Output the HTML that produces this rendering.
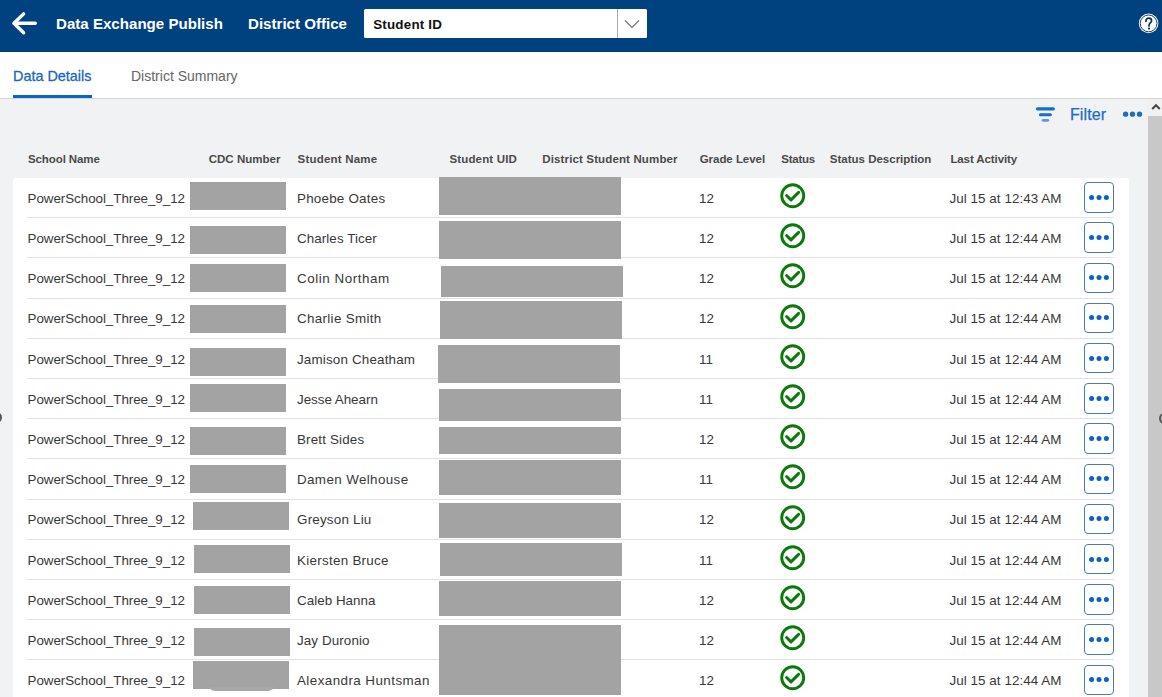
<!DOCTYPE html>
<html><head><meta charset="utf-8">
<style>
*{box-sizing:border-box;margin:0;padding:0}
html,body{width:1162px;height:697px;overflow:hidden;background:#f1f2f4;font-family:"Liberation Sans",sans-serif;position:relative}
.abs{position:absolute}
#hdr{left:0;top:0;width:1162px;height:52px;background:#00427f;border-bottom:1px solid #003a70}
.ht{color:#fff;font-weight:bold;font-size:15.1px;white-space:nowrap;top:15px;line-height:18px}
#dd{left:363.8px;top:8.6px;width:283.4px;height:29.8px;background:#fff;border-radius:1.5px}
#dd .t{left:9.4px;top:8px;letter-spacing:0.2px;font-size:13.4px;font-weight:bold;color:#111;line-height:16px}
#dd .div{left:253.6px;top:0;width:1px;height:29.8px;background:#aaa}
#tabs{left:0;top:52px;width:1162px;height:47px;background:#fff;border-bottom:1px solid #d4d4d4}
.tab{top:15px;font-size:14px;line-height:18px;white-space:nowrap}
#card{left:13px;top:178px;width:1116px;height:530px;background:#fff;border-radius:3px}
.th{top:152px;font-size:11.5px;font-weight:bold;color:#4a4a4a;line-height:14px;white-space:nowrap}
.td{font-size:13.4px;color:#383838;line-height:16px;white-space:nowrap}
.sep{left:27px;width:1087px;height:1px;background:#e2e2e2}
.red{background:#a3a3a3}
.mb{left:1084px;width:30px;height:30.4px;border:1.5px solid #4c7aad;border-radius:4px;background:#fff}
.mb i{position:absolute;top:11.5px;width:5.4px;height:5.4px;border-radius:50%;background:#0b62c2}
</style></head><body>
<div id="hdr" class="abs">
  <svg class="abs" style="left:10px;top:10px" width="30" height="28" viewBox="0 0 30 28">
    <path d="M13.6 3.9 L3.9 13.3 L13.6 22.7 M4.5 13.3 H25.3" stroke="#fff" stroke-width="3.4" fill="none" stroke-linecap="round" stroke-linejoin="round"/>
  </svg>
  <div class="abs ht" style="left:56px">Data Exchange Publish</div>
  <div class="abs ht" style="left:248px">District Office</div>
  <div id="dd" class="abs">
    <div class="abs t">Student ID</div>
    <div class="abs div"></div>
    <svg class="abs" style="left:259px;top:10px" width="18" height="10" viewBox="0 0 18 10"><path d="M2 1.5 L9 8.5 L16 1.5" stroke="#707070" stroke-width="1.2" fill="none"/></svg>
  </div>
  <svg class="abs" style="left:1137px;top:12px" width="23" height="23" viewBox="0 0 23 23">
    <circle cx="11.6" cy="11.4" r="9.8" fill="#f4f8fc"/>
    <circle cx="11.6" cy="11.4" r="8.4" fill="#fff" stroke="#1f3f66" stroke-width="1"/>
    <path d="M8.9 9.2 C8.9 7.2 10.2 6.2 11.8 6.2 C13.5 6.2 14.6 7.3 14.6 8.7 C14.6 10.6 12 11 12 13.2 L12 14" fill="none" stroke="#0f2f57" stroke-width="1.7" stroke-linecap="round"/>
    <circle cx="12" cy="16.6" r="1.1" fill="#0f2f57"/>
  </svg>
</div>
<div id="tabs" class="abs">
  <div class="abs tab" style="left:13px;color:#1b68b9;font-size:14.4px;-webkit-text-stroke:0.3px #1b68b9">Data Details</div>
  <div class="abs" style="left:13px;top:43px;width:79px;height:3px;background:#0b63c4"></div>
  <div class="abs tab" style="left:131px;color:#666">District Summary</div>
</div>
<div class="abs" style="left:0;top:99px;width:1162px;height:598px;background:#f1f2f4"></div>
<svg class="abs" style="left:1034px;top:105px" width="24" height="19" viewBox="0 0 24 19">
  <rect x="1.8" y="2.2" width="19.2" height="3.2" rx="1.6" fill="#1a6fc4"/>
  <rect x="4.9" y="8.3" width="13" height="3" rx="1.5" fill="#1a6fc4"/>
  <rect x="7.7" y="13.9" width="7.5" height="2.8" rx="1.4" fill="#5a9be0"/>
</svg>
<div class="abs" style="left:1070px;top:105.5px;font-size:16px;line-height:18px;color:#1a6fc4;-webkit-text-stroke:0.25px #1a6fc4;letter-spacing:0.1px">Filter</div>
<svg class="abs" style="left:1120px;top:108px" width="26" height="12" viewBox="0 0 26 12"><circle cx="5.6" cy="6.2" r="2.65" fill="#1a6fc4"/><circle cx="12.5" cy="6.2" r="2.65" fill="#1a6fc4"/><circle cx="19.5" cy="6.2" r="2.65" fill="#1a6fc4"/></svg>
<div class="abs" style="left:1147px;top:99px;width:15px;height:598px;background:#f1f1f1"></div>
<div class="abs" style="left:1148px;top:116px;width:14px;height:581px;background:#c8c8c8"></div>
<svg class="abs" style="left:1150px;top:102px" width="12" height="10" viewBox="0 0 12 10"><path d="M2.2 7 L6 3.2 L9.8 7" stroke="#444" stroke-width="2" fill="none"/></svg>
<div class="abs th" id="th0" style="left:28px;letter-spacing:-0.1px">School Name</div>
<div class="abs th" id="th1" style="left:208.7px;letter-spacing:0.022px">CDC Number</div>
<div class="abs th" id="th2" style="left:297.6px;letter-spacing:0.2px">Student Name</div>
<div class="abs th" id="th3" style="left:449.4px;letter-spacing:0.16px">Student UID</div>
<div class="abs th" id="th4" style="left:542.3px;letter-spacing:0.136px">District Student Number</div>
<div class="abs th" id="th5" style="left:699.7px;letter-spacing:-0.04px">Grade Level</div>
<div class="abs th" id="th6" style="left:781.3px;letter-spacing:-0.24px">Status</div>
<div class="abs th" id="th7" style="left:829.8px;letter-spacing:0.0px">Status Description</div>
<div class="abs th" id="th8" style="left:950.4px;letter-spacing:-0.1px">Last Activity</div>
<div id="card" class="abs"></div>
<div class="abs td" id="sc0" style="left:27.5px;top:190.86px;letter-spacing:-0.05px">PowerSchool_Three_9_12</div>
<div class="abs td" id="nm0" style="left:297px;top:190.86px;letter-spacing:0.227px">Phoebe Oates</div>
<div class="abs td" id="gr0" style="left:699px;top:190.86px">12</div>
<div class="abs td" id="tm0" style="left:949.5px;top:190.86px;letter-spacing:0.055px">Jul 15 at 12:43 AM</div>
<svg class="abs" style="left:778px;top:181.00px" width="30" height="30" viewBox="0 0 30 30"><circle cx="14.7" cy="14.7" r="11" fill="none" stroke="#0b7a0b" stroke-width="2.9"/><path d="M8.6 14.5 L13 18.9 L20.6 11.4" fill="none" stroke="#0b7a0b" stroke-width="3" stroke-linecap="round" stroke-linejoin="round"/></svg>
<div class="abs mb" style="top:182.20px"><svg style="position:absolute;left:-1.5px;top:-1.5px" width="30" height="30" viewBox="0 0 30 30"><circle cx="7.6" cy="15.6" r="2.5" fill="#0b62c2"/><circle cx="15" cy="15.6" r="2.5" fill="#0b62c2"/><circle cx="22.4" cy="15.6" r="2.5" fill="#0b62c2"/></svg></div>
<div class="abs sep" style="top:217.20px"></div>
<div class="abs td" id="sc1" style="left:27.5px;top:231.06px;letter-spacing:-0.05px">PowerSchool_Three_9_12</div>
<div class="abs td" id="nm1" style="left:297px;top:231.06px;letter-spacing:0.075px">Charles Ticer</div>
<div class="abs td" id="gr1" style="left:699px;top:231.06px">12</div>
<div class="abs td" id="tm1" style="left:949.5px;top:231.06px;letter-spacing:0.055px">Jul 15 at 12:44 AM</div>
<svg class="abs" style="left:778px;top:221.20px" width="30" height="30" viewBox="0 0 30 30"><circle cx="14.7" cy="14.7" r="11" fill="none" stroke="#0b7a0b" stroke-width="2.9"/><path d="M8.6 14.5 L13 18.9 L20.6 11.4" fill="none" stroke="#0b7a0b" stroke-width="3" stroke-linecap="round" stroke-linejoin="round"/></svg>
<div class="abs mb" style="top:222.40px"><svg style="position:absolute;left:-1.5px;top:-1.5px" width="30" height="30" viewBox="0 0 30 30"><circle cx="7.6" cy="15.6" r="2.5" fill="#0b62c2"/><circle cx="15" cy="15.6" r="2.5" fill="#0b62c2"/><circle cx="22.4" cy="15.6" r="2.5" fill="#0b62c2"/></svg></div>
<div class="abs sep" style="top:257.40px"></div>
<div class="abs td" id="sc2" style="left:27.5px;top:271.26px;letter-spacing:-0.05px">PowerSchool_Three_9_12</div>
<div class="abs td" id="nm2" style="left:297px;top:271.26px;letter-spacing:0.551px">Colin Northam</div>
<div class="abs td" id="gr2" style="left:699px;top:271.26px">12</div>
<div class="abs td" id="tm2" style="left:949.5px;top:271.26px;letter-spacing:0.055px">Jul 15 at 12:44 AM</div>
<svg class="abs" style="left:778px;top:261.40px" width="30" height="30" viewBox="0 0 30 30"><circle cx="14.7" cy="14.7" r="11" fill="none" stroke="#0b7a0b" stroke-width="2.9"/><path d="M8.6 14.5 L13 18.9 L20.6 11.4" fill="none" stroke="#0b7a0b" stroke-width="3" stroke-linecap="round" stroke-linejoin="round"/></svg>
<div class="abs mb" style="top:262.60px"><svg style="position:absolute;left:-1.5px;top:-1.5px" width="30" height="30" viewBox="0 0 30 30"><circle cx="7.6" cy="15.6" r="2.5" fill="#0b62c2"/><circle cx="15" cy="15.6" r="2.5" fill="#0b62c2"/><circle cx="22.4" cy="15.6" r="2.5" fill="#0b62c2"/></svg></div>
<div class="abs sep" style="top:297.60px"></div>
<div class="abs td" id="sc3" style="left:27.5px;top:311.46px;letter-spacing:-0.05px">PowerSchool_Three_9_12</div>
<div class="abs td" id="nm3" style="left:297px;top:311.46px;letter-spacing:0.325px">Charlie Smith</div>
<div class="abs td" id="gr3" style="left:699px;top:311.46px">12</div>
<div class="abs td" id="tm3" style="left:949.5px;top:311.46px;letter-spacing:0.055px">Jul 15 at 12:44 AM</div>
<svg class="abs" style="left:778px;top:301.60px" width="30" height="30" viewBox="0 0 30 30"><circle cx="14.7" cy="14.7" r="11" fill="none" stroke="#0b7a0b" stroke-width="2.9"/><path d="M8.6 14.5 L13 18.9 L20.6 11.4" fill="none" stroke="#0b7a0b" stroke-width="3" stroke-linecap="round" stroke-linejoin="round"/></svg>
<div class="abs mb" style="top:302.80px"><svg style="position:absolute;left:-1.5px;top:-1.5px" width="30" height="30" viewBox="0 0 30 30"><circle cx="7.6" cy="15.6" r="2.5" fill="#0b62c2"/><circle cx="15" cy="15.6" r="2.5" fill="#0b62c2"/><circle cx="22.4" cy="15.6" r="2.5" fill="#0b62c2"/></svg></div>
<div class="abs sep" style="top:337.80px"></div>
<div class="abs td" id="sc4" style="left:27.5px;top:351.66px;letter-spacing:-0.05px">PowerSchool_Three_9_12</div>
<div class="abs td" id="nm4" style="left:297px;top:351.66px;letter-spacing:0.173px">Jamison Cheatham</div>
<div class="abs td" id="gr4" style="left:699px;top:351.66px">11</div>
<div class="abs td" id="tm4" style="left:949.5px;top:351.66px;letter-spacing:0.055px">Jul 15 at 12:44 AM</div>
<svg class="abs" style="left:778px;top:341.80px" width="30" height="30" viewBox="0 0 30 30"><circle cx="14.7" cy="14.7" r="11" fill="none" stroke="#0b7a0b" stroke-width="2.9"/><path d="M8.6 14.5 L13 18.9 L20.6 11.4" fill="none" stroke="#0b7a0b" stroke-width="3" stroke-linecap="round" stroke-linejoin="round"/></svg>
<div class="abs mb" style="top:343.00px"><svg style="position:absolute;left:-1.5px;top:-1.5px" width="30" height="30" viewBox="0 0 30 30"><circle cx="7.6" cy="15.6" r="2.5" fill="#0b62c2"/><circle cx="15" cy="15.6" r="2.5" fill="#0b62c2"/><circle cx="22.4" cy="15.6" r="2.5" fill="#0b62c2"/></svg></div>
<div class="abs sep" style="top:378.00px"></div>
<div class="abs td" id="sc5" style="left:27.5px;top:391.86px;letter-spacing:-0.05px">PowerSchool_Three_9_12</div>
<div class="abs td" id="nm5" style="left:297px;top:391.86px;letter-spacing:-0.027px">Jesse Ahearn</div>
<div class="abs td" id="gr5" style="left:699px;top:391.86px">11</div>
<div class="abs td" id="tm5" style="left:949.5px;top:391.86px;letter-spacing:0.055px">Jul 15 at 12:44 AM</div>
<svg class="abs" style="left:778px;top:382.00px" width="30" height="30" viewBox="0 0 30 30"><circle cx="14.7" cy="14.7" r="11" fill="none" stroke="#0b7a0b" stroke-width="2.9"/><path d="M8.6 14.5 L13 18.9 L20.6 11.4" fill="none" stroke="#0b7a0b" stroke-width="3" stroke-linecap="round" stroke-linejoin="round"/></svg>
<div class="abs mb" style="top:383.20px"><svg style="position:absolute;left:-1.5px;top:-1.5px" width="30" height="30" viewBox="0 0 30 30"><circle cx="7.6" cy="15.6" r="2.5" fill="#0b62c2"/><circle cx="15" cy="15.6" r="2.5" fill="#0b62c2"/><circle cx="22.4" cy="15.6" r="2.5" fill="#0b62c2"/></svg></div>
<div class="abs sep" style="top:418.20px"></div>
<div class="abs td" id="sc6" style="left:27.5px;top:432.06px;letter-spacing:-0.05px">PowerSchool_Three_9_12</div>
<div class="abs td" id="nm6" style="left:297px;top:432.06px;letter-spacing:0.16px">Brett Sides</div>
<div class="abs td" id="gr6" style="left:699px;top:432.06px">12</div>
<div class="abs td" id="tm6" style="left:949.5px;top:432.06px;letter-spacing:0.055px">Jul 15 at 12:44 AM</div>
<svg class="abs" style="left:778px;top:422.20px" width="30" height="30" viewBox="0 0 30 30"><circle cx="14.7" cy="14.7" r="11" fill="none" stroke="#0b7a0b" stroke-width="2.9"/><path d="M8.6 14.5 L13 18.9 L20.6 11.4" fill="none" stroke="#0b7a0b" stroke-width="3" stroke-linecap="round" stroke-linejoin="round"/></svg>
<div class="abs mb" style="top:423.40px"><svg style="position:absolute;left:-1.5px;top:-1.5px" width="30" height="30" viewBox="0 0 30 30"><circle cx="7.6" cy="15.6" r="2.5" fill="#0b62c2"/><circle cx="15" cy="15.6" r="2.5" fill="#0b62c2"/><circle cx="22.4" cy="15.6" r="2.5" fill="#0b62c2"/></svg></div>
<div class="abs sep" style="top:458.40px"></div>
<div class="abs td" id="sc7" style="left:27.5px;top:472.26px;letter-spacing:-0.05px">PowerSchool_Three_9_12</div>
<div class="abs td" id="nm7" style="left:297px;top:472.26px;letter-spacing:0.377px">Damen Welhouse</div>
<div class="abs td" id="gr7" style="left:699px;top:472.26px">11</div>
<div class="abs td" id="tm7" style="left:949.5px;top:472.26px;letter-spacing:0.055px">Jul 15 at 12:44 AM</div>
<svg class="abs" style="left:778px;top:462.40px" width="30" height="30" viewBox="0 0 30 30"><circle cx="14.7" cy="14.7" r="11" fill="none" stroke="#0b7a0b" stroke-width="2.9"/><path d="M8.6 14.5 L13 18.9 L20.6 11.4" fill="none" stroke="#0b7a0b" stroke-width="3" stroke-linecap="round" stroke-linejoin="round"/></svg>
<div class="abs mb" style="top:463.60px"><svg style="position:absolute;left:-1.5px;top:-1.5px" width="30" height="30" viewBox="0 0 30 30"><circle cx="7.6" cy="15.6" r="2.5" fill="#0b62c2"/><circle cx="15" cy="15.6" r="2.5" fill="#0b62c2"/><circle cx="22.4" cy="15.6" r="2.5" fill="#0b62c2"/></svg></div>
<div class="abs sep" style="top:498.60px"></div>
<div class="abs td" id="sc8" style="left:27.5px;top:512.46px;letter-spacing:-0.05px">PowerSchool_Three_9_12</div>
<div class="abs td" id="nm8" style="left:297px;top:512.46px;letter-spacing:0.21px">Greyson Liu</div>
<div class="abs td" id="gr8" style="left:699px;top:512.46px">12</div>
<div class="abs td" id="tm8" style="left:949.5px;top:512.46px;letter-spacing:0.055px">Jul 15 at 12:44 AM</div>
<svg class="abs" style="left:778px;top:502.60px" width="30" height="30" viewBox="0 0 30 30"><circle cx="14.7" cy="14.7" r="11" fill="none" stroke="#0b7a0b" stroke-width="2.9"/><path d="M8.6 14.5 L13 18.9 L20.6 11.4" fill="none" stroke="#0b7a0b" stroke-width="3" stroke-linecap="round" stroke-linejoin="round"/></svg>
<div class="abs mb" style="top:503.80px"><svg style="position:absolute;left:-1.5px;top:-1.5px" width="30" height="30" viewBox="0 0 30 30"><circle cx="7.6" cy="15.6" r="2.5" fill="#0b62c2"/><circle cx="15" cy="15.6" r="2.5" fill="#0b62c2"/><circle cx="22.4" cy="15.6" r="2.5" fill="#0b62c2"/></svg></div>
<div class="abs sep" style="top:538.80px"></div>
<div class="abs td" id="sc9" style="left:27.5px;top:552.66px;letter-spacing:-0.05px">PowerSchool_Three_9_12</div>
<div class="abs td" id="nm9" style="left:297px;top:552.66px;letter-spacing:0.284px">Kiersten Bruce</div>
<div class="abs td" id="gr9" style="left:699px;top:552.66px">11</div>
<div class="abs td" id="tm9" style="left:949.5px;top:552.66px;letter-spacing:0.055px">Jul 15 at 12:44 AM</div>
<svg class="abs" style="left:778px;top:542.80px" width="30" height="30" viewBox="0 0 30 30"><circle cx="14.7" cy="14.7" r="11" fill="none" stroke="#0b7a0b" stroke-width="2.9"/><path d="M8.6 14.5 L13 18.9 L20.6 11.4" fill="none" stroke="#0b7a0b" stroke-width="3" stroke-linecap="round" stroke-linejoin="round"/></svg>
<div class="abs mb" style="top:544.00px"><svg style="position:absolute;left:-1.5px;top:-1.5px" width="30" height="30" viewBox="0 0 30 30"><circle cx="7.6" cy="15.6" r="2.5" fill="#0b62c2"/><circle cx="15" cy="15.6" r="2.5" fill="#0b62c2"/><circle cx="22.4" cy="15.6" r="2.5" fill="#0b62c2"/></svg></div>
<div class="abs sep" style="top:579.00px"></div>
<div class="abs td" id="sc10" style="left:27.5px;top:592.86px;letter-spacing:-0.05px">PowerSchool_Three_9_12</div>
<div class="abs td" id="nm10" style="left:297px;top:592.86px;letter-spacing:0.03px">Caleb Hanna</div>
<div class="abs td" id="gr10" style="left:699px;top:592.86px">12</div>
<div class="abs td" id="tm10" style="left:949.5px;top:592.86px;letter-spacing:0.055px">Jul 15 at 12:44 AM</div>
<svg class="abs" style="left:778px;top:583.00px" width="30" height="30" viewBox="0 0 30 30"><circle cx="14.7" cy="14.7" r="11" fill="none" stroke="#0b7a0b" stroke-width="2.9"/><path d="M8.6 14.5 L13 18.9 L20.6 11.4" fill="none" stroke="#0b7a0b" stroke-width="3" stroke-linecap="round" stroke-linejoin="round"/></svg>
<div class="abs mb" style="top:584.20px"><svg style="position:absolute;left:-1.5px;top:-1.5px" width="30" height="30" viewBox="0 0 30 30"><circle cx="7.6" cy="15.6" r="2.5" fill="#0b62c2"/><circle cx="15" cy="15.6" r="2.5" fill="#0b62c2"/><circle cx="22.4" cy="15.6" r="2.5" fill="#0b62c2"/></svg></div>
<div class="abs sep" style="top:619.20px"></div>
<div class="abs td" id="sc11" style="left:27.5px;top:633.06px;letter-spacing:-0.05px">PowerSchool_Three_9_12</div>
<div class="abs td" id="nm11" style="left:297px;top:633.06px;letter-spacing:0.1px">Jay Duronio</div>
<div class="abs td" id="gr11" style="left:699px;top:633.06px">12</div>
<div class="abs td" id="tm11" style="left:949.5px;top:633.06px;letter-spacing:0.055px">Jul 15 at 12:44 AM</div>
<svg class="abs" style="left:778px;top:623.20px" width="30" height="30" viewBox="0 0 30 30"><circle cx="14.7" cy="14.7" r="11" fill="none" stroke="#0b7a0b" stroke-width="2.9"/><path d="M8.6 14.5 L13 18.9 L20.6 11.4" fill="none" stroke="#0b7a0b" stroke-width="3" stroke-linecap="round" stroke-linejoin="round"/></svg>
<div class="abs mb" style="top:624.40px"><svg style="position:absolute;left:-1.5px;top:-1.5px" width="30" height="30" viewBox="0 0 30 30"><circle cx="7.6" cy="15.6" r="2.5" fill="#0b62c2"/><circle cx="15" cy="15.6" r="2.5" fill="#0b62c2"/><circle cx="22.4" cy="15.6" r="2.5" fill="#0b62c2"/></svg></div>
<div class="abs sep" style="top:659.40px"></div>
<div class="abs td" id="sc12" style="left:27.5px;top:673.26px;letter-spacing:-0.05px">PowerSchool_Three_9_12</div>
<div class="abs td" id="nm12" style="left:297px;top:673.26px;letter-spacing:0.435px">Alexandra Huntsman</div>
<div class="abs td" id="gr12" style="left:699px;top:673.26px">12</div>
<div class="abs td" id="tm12" style="left:949.5px;top:673.26px;letter-spacing:0.055px">Jul 15 at 12:44 AM</div>
<svg class="abs" style="left:778px;top:663.40px" width="30" height="30" viewBox="0 0 30 30"><circle cx="14.7" cy="14.7" r="11" fill="none" stroke="#0b7a0b" stroke-width="2.9"/><path d="M8.6 14.5 L13 18.9 L20.6 11.4" fill="none" stroke="#0b7a0b" stroke-width="3" stroke-linecap="round" stroke-linejoin="round"/></svg>
<div class="abs mb" style="top:664.60px"><svg style="position:absolute;left:-1.5px;top:-1.5px" width="30" height="30" viewBox="0 0 30 30"><circle cx="7.6" cy="15.6" r="2.5" fill="#0b62c2"/><circle cx="15" cy="15.6" r="2.5" fill="#0b62c2"/><circle cx="22.4" cy="15.6" r="2.5" fill="#0b62c2"/></svg></div>
<div class="abs red" style="left:190px;top:182.1px;width:96.0px;height:27.7px"></div>
<div class="abs red" style="left:190px;top:226.2px;width:96.0px;height:27.5px"></div>
<div class="abs red" style="left:190px;top:264.1px;width:96.0px;height:27.5px"></div>
<div class="abs red" style="left:190px;top:305px;width:96.0px;height:27.7px"></div>
<div class="abs red" style="left:190px;top:348px;width:96.0px;height:27.6px"></div>
<div class="abs red" style="left:190px;top:384.1px;width:96.0px;height:27.5px"></div>
<div class="abs red" style="left:190px;top:427.2px;width:96.0px;height:27.4px"></div>
<div class="abs red" style="left:190px;top:465px;width:96.0px;height:27.7px"></div>
<div class="abs red" style="left:193.2px;top:502.1px;width:95.7px;height:27.7px"></div>
<div class="abs red" style="left:194.1px;top:545px;width:95.7px;height:27.7px"></div>
<div class="abs red" style="left:194px;top:586px;width:95.8px;height:27.5px"></div>
<div class="abs red" style="left:194px;top:628px;width:95.8px;height:27.8px"></div>
<div class="abs red" style="left:193.1px;top:661px;width:95.7px;height:27.7px"></div>
<div class="abs red" style="left:439.1px;top:176.9px;width:181.8px;height:37.7px"></div>
<div class="abs red" style="left:439.1px;top:221px;width:181.8px;height:37.6px"></div>
<div class="abs red" style="left:441.1px;top:265.8px;width:181.8px;height:31.1px"></div>
<div class="abs red" style="left:440px;top:300.9px;width:182.0px;height:37.8px"></div>
<div class="abs red" style="left:438px;top:344.9px;width:181.8px;height:38.0px"></div>
<div class="abs red" style="left:439.1px;top:388.9px;width:181.8px;height:31.9px"></div>
<div class="abs red" style="left:439.1px;top:427.1px;width:181.8px;height:26.6px"></div>
<div class="abs red" style="left:439px;top:460px;width:182.0px;height:34.7px"></div>
<div class="abs red" style="left:439.1px;top:503px;width:181.8px;height:35.0px"></div>
<div class="abs red" style="left:440px;top:542.9px;width:182.0px;height:32.9px"></div>
<div class="abs red" style="left:439.1px;top:581px;width:181.8px;height:34.8px"></div>
<div class="abs red" style="left:439.1px;top:625px;width:181.8px;height:69.6px"></div>
<div class="abs" style="left:209px;top:687px;width:65px;height:4.3px;border-radius:0 0 7px 7px/0 0 4px 4px;background:#a8a8a8"></div>
<div class="abs" style="left:-9px;top:412px;width:11px;height:11px;border-radius:50%;background:#555"></div>
<div class="abs" style="left:1158.5px;top:412.5px;width:11px;height:11px;border-radius:50%;border:2.2px solid #555"></div>
</body></html>
